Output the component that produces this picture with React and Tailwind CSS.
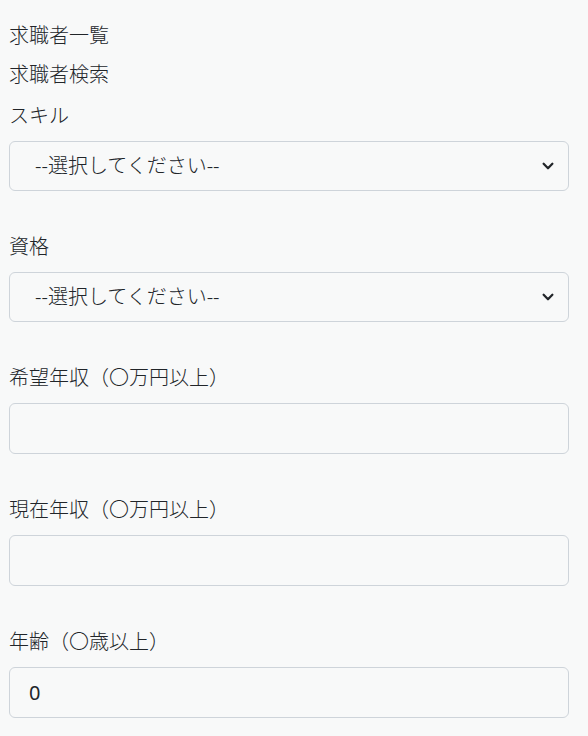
import React from "react";

function Chevron() {
  return (
    <svg
      className="pointer-events-none absolute right-[14px] top-1/2 -translate-y-1/2"
      width="14"
      height="14"
      viewBox="0 0 16 16"
      fill="none"
      stroke="#212529"
      strokeWidth="2.6"
      strokeLinecap="round"
      strokeLinejoin="round"
    >
      <path d="M3 5.5l5 5 5-5" />
    </svg>
  );
}

function SelectField({ label }) {
  return (
    <div className="mb-[41px]">
      <div className="leading-[30px] mb-[10px]">{label}</div>
      <div className="relative w-[560px]">
        <select className="appearance-none w-full h-[50px] rounded-[6px] border border-[#ced4da] bg-transparent pl-[25px] pr-10 text-[#212529] outline-none">
          <option>--選択してください--</option>
        </select>
        <Chevron />
      </div>
    </div>
  );
}

function InputField({ label, value }) {
  return (
    <div className="mb-[41px]">
      <div className="leading-[30px] mb-[10px]">{label}</div>
      <input
        type="text"
        defaultValue={value}
        className="block w-[560px] h-[51px] rounded-[6px] border border-[#ced4da] bg-transparent px-[19px] font-normal text-[#212529] outline-none"
      />
    </div>
  );
}

export default function App() {
  return (
    <div className="min-h-[736px] bg-[#f8f9f9] text-[#212529] text-[20px] font-light font-['Noto_Sans','Noto_Sans_CJK_JP',sans-serif] pl-[9px] pt-[21px]">
      <div className="leading-[30px] mb-[9px]">求職者一覧</div>
      <div className="leading-[30px] mb-[11px]">求職者検索</div>
      <SelectField label="スキル" />
      <SelectField label="資格" />
      <InputField label="希望年収（〇万円以上）" value="" />
      <InputField label="現在年収（〇万円以上）" value="" />
      <InputField label="年齢（〇歳以上）" value="0" />
    </div>
  );
}
